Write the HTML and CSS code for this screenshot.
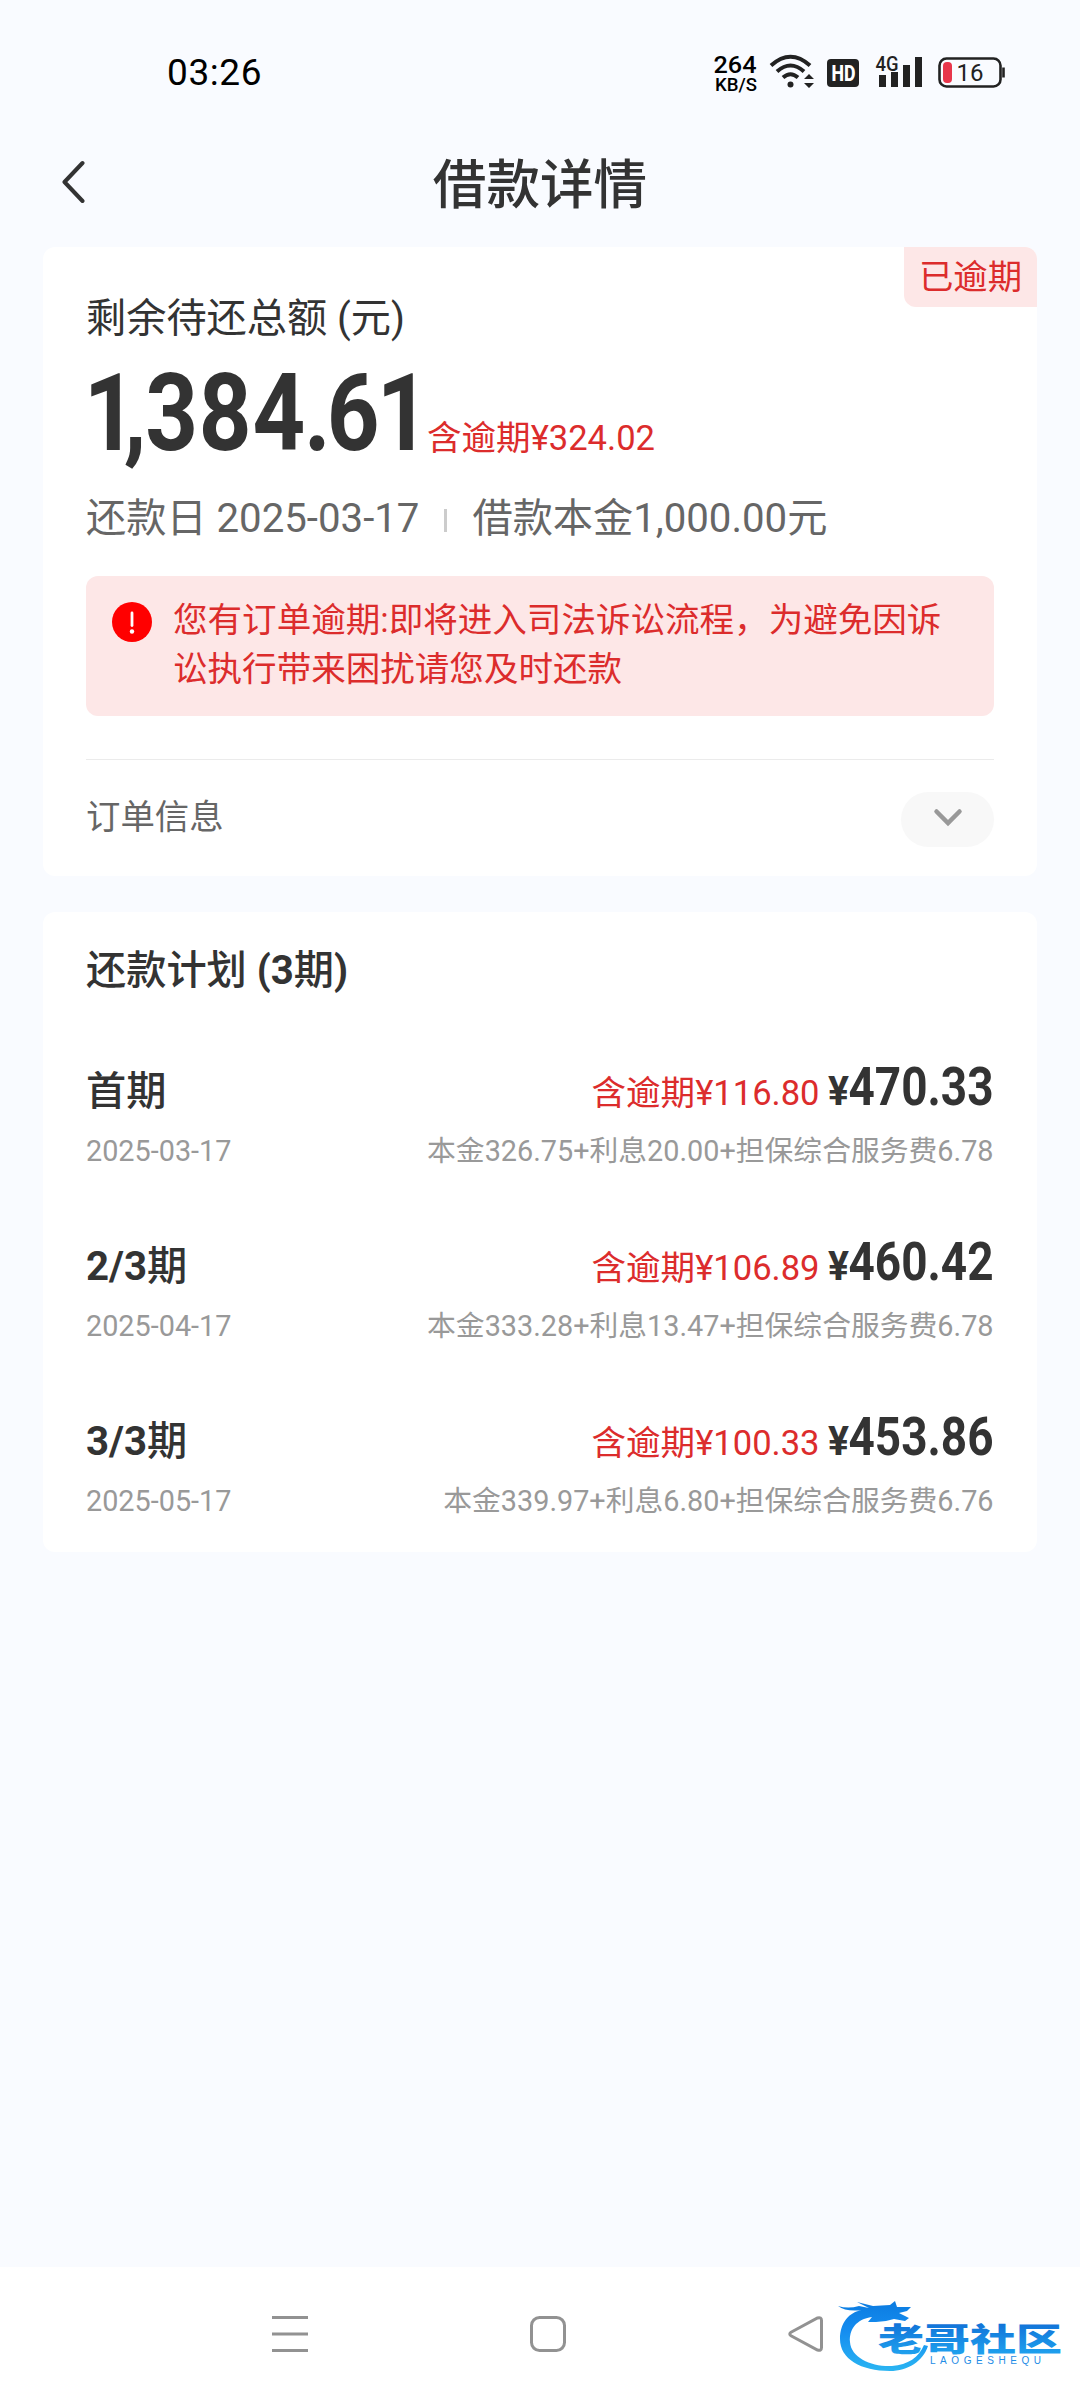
FILE: index.html
```html
<!DOCTYPE html>
<html lang="zh-CN">
<head>
  <meta charset="UTF-8" />
  <meta name="viewport" content="width=device-width, initial-scale=1.0"/>
  <title>借款详情</title>
  <link rel="stylesheet" href="styles.css">
</head>
<body>
  <div class="status-bar">
    <span class="time">03:26</span>
    <svg class="status-icons" width="300" height="44" viewBox="710 50 300 44">
      <text class="net" x="713.5" y="73" font-size="24" textLength="43" lengthAdjust="spacingAndGlyphs">264</text>
      <text class="net" x="715" y="90.5" font-size="18.5" textLength="42" lengthAdjust="spacingAndGlyphs">KB/S</text>
      <!-- wifi -->
      <g fill="none" stroke="#222" stroke-width="4">
        <path d="M771 65.5Q790.5 48 810 65.5"/>
        <path d="M777 71.5Q790.5 59.5 804 71.5"/>
        <path d="M783 77.5Q790.5 71 798 77.5"/>
      </g>
      <circle cx="790.5" cy="84.5" r="3" fill="#222"/>
      <path d="M804 79l5-5 5 5zM804 83l5 5 5-5z" fill="#222"/>
      <!-- HD -->
      <rect x="827" y="59" width="32" height="28" rx="4" fill="#222"/>
      <text class="hd" x="831.5" y="81" font-size="22" textLength="24" lengthAdjust="spacingAndGlyphs">HD</text>
      <!-- signal -->
      <text class="net gray" x="875.5" y="70.5" font-size="20" textLength="23" lengthAdjust="spacingAndGlyphs">4G</text>
      <path d="M879 75h7v12h-7zM891 72h7v15h-7zM903 65h7v22h-7zM915 57h7v30h-7z" fill="#222"/>
      <!-- battery -->
      <rect x="939.5" y="58.5" width="61" height="28" rx="7" fill="none" stroke="#222" stroke-width="2.6"/>
      <rect x="943" y="62" width="9" height="21" rx="4" fill="#e8364b"/>
      <path d="M1003.5 67.5v10" stroke="#222" stroke-width="2.6"/>
      <text class="battery" x="956.5" y="81" font-size="24">16</text>
    </svg>
  </div>

  <div class="header">
    <svg class="back" width="24" height="44" viewBox="0 0 24 44">
      <path d="M21.5 3L3.5 22l18 19" fill="none" stroke="#333" stroke-width="4" stroke-linecap="round" stroke-linejoin="round"/>
    </svg>
    <h1>借款详情</h1>
  </div>

  <div class="card summary">
    <div class="badge">已逾期</div>
    <div class="label">剩余待还总额 (元)</div>
    <div class="total">
      <svg class="amount" width="330" height="80">
        <text transform="scale(.86 1)" x="-2.5 44 69 131 193.5 253.5 280 338" y="80" font-size="107">1,384.61</text>
      </svg>
      <span class="overdue">含逾期¥324.02</span>
    </div>
    <div class="meta">
      <span>还款日 2025-03-17</span>
      <i class="split"></i>
      <span>借款本金1,000.00元</span>
    </div>
    <div class="alert">
      <svg width="40" height="40" viewBox="0 0 40 40">
        <circle cx="20" cy="20" r="20" fill="#f00"/>
        <path d="M20 11v12.500" stroke="#fff" stroke-width="2.800" stroke-linecap="round"/>
        <circle cx="20" cy="29.500" r="2.200" fill="#fff"/>
      </svg>
      <p>您有订单逾期:即将进入司法诉讼流程，为避免因诉讼执行带来困扰请您及时还款</p>
    </div>
    <div class="order">
      <span>订单信息</span>
      <div class="toggle">
        <svg width="30" height="20" viewBox="0 0 30 20">
          <path d="M3.500 3.500L15 15 26.500 3.500" fill="none" stroke="#999" stroke-width="4.500" stroke-linecap="round"/>
        </svg>
      </div>
    </div>
  </div>

  <div class="card plan">
    <h2>还款计划 <b>(3</b>期<b>)</b></h2>
    <div class="list">
      <div class="item">
        <div class="row main">
          <span class="term">首期</span>
          <span class="overdue">含逾期¥116.80</span>
          <svg class="amount" width="166" height="40">
            <text x="0" y="40" font-size="40" textLength="21" lengthAdjust="spacingAndGlyphs">¥</text>
            <text x="20.5" y="40" font-size="53" textLength="145" lengthAdjust="spacingAndGlyphs">470.33</text>
          </svg>
        </div>
        <div class="row sub">
          <span>2025-03-17</span>
          <span>本金326.75+利息20.00+担保综合服务费6.78</span>
        </div>
      </div>
      <div class="item">
        <div class="row main">
          <span class="term"><b>2/3</b>期</span>
          <span class="overdue">含逾期¥106.89</span>
          <svg class="amount" width="166" height="40">
            <text x="0" y="40" font-size="40" textLength="21" lengthAdjust="spacingAndGlyphs">¥</text>
            <text x="20.5" y="40" font-size="53" textLength="145" lengthAdjust="spacingAndGlyphs">460.42</text>
          </svg>
        </div>
        <div class="row sub">
          <span>2025-04-17</span>
          <span>本金333.28+利息13.47+担保综合服务费6.78</span>
        </div>
      </div>
      <div class="item">
        <div class="row main">
          <span class="term"><b>3/3</b>期</span>
          <span class="overdue">含逾期¥100.33</span>
          <svg class="amount" width="166" height="40">
            <text x="0" y="40" font-size="40" textLength="21" lengthAdjust="spacingAndGlyphs">¥</text>
            <text x="20.5" y="40" font-size="53" textLength="145" lengthAdjust="spacingAndGlyphs">453.86</text>
          </svg>
        </div>
        <div class="row sub">
          <span>2025-05-17</span>
          <span>本金339.97+利息6.80+担保综合服务费6.76</span>
        </div>
      </div>
    </div>
  </div>

  <div class="nav-bar">
    <svg width="36" height="36" viewBox="0 0 36 36">
      <path d="M0 1.500h36M0 18h36M0 34.500h36"/>
    </svg>
    <svg width="36" height="36" viewBox="0 0 36 36">
      <rect x="1.500" y="1.500" width="33" height="33" rx="8"/>
    </svg>
    <svg width="36" height="36" viewBox="0 0 36 36">
      <path d="M3 16.200L29.500 2Q33.500 .8 33.500 4.500V31.500Q33.500 35.200 29.500 34L3 19.800Q.5 18 3 16.200Z"/>
    </svg>
  </div>

  <svg class="watermark" width="226" height="80" viewBox="836 2294 226 80">
    <defs>
      <linearGradient id="blue" gradientUnits="userSpaceOnUse" x1="0" y1="2300" x2="0" y2="2370">
        <stop offset="0" stop-color="#0b7be0"/>
        <stop offset=".45" stop-color="#158df0"/>
        <stop offset="1" stop-color="#2ab4f2"/>
      </linearGradient>
      <linearGradient id="word" x1="0" y1="0" x2="0" y2="1">
        <stop offset=".2" stop-color="#1173d8"/>
        <stop offset="1" stop-color="#22aaf2"/>
      </linearGradient>
    </defs>
    <!-- dragon -->
    <path fill="url(#blue)" d="M838 2306Q848 2309 859 2306L869 2308L857 2302L873 2306L890 2305L895 2301L897 2307L911 2307L907 2311L899 2313L909 2318L905 2321L894 2319L886 2321L876 2322L868 2322L872 2317C856 2319 849 2330 850 2342C851 2358 872 2367 892 2366C908 2365 919 2357 924 2345L928 2346C923 2361 908 2371 890 2371C861 2371 840 2359 840 2339C840 2323 849 2312 862 2310Q846 2312 838 2306Z"/>
    <text class="wm-name" x="878" y="2351" font-size="32" textLength="184" lengthAdjust="spacingAndGlyphs" fill="url(#word)">老哥社区</text>
    <text class="wm-sub" x="930" y="2364" font-size="10" textLength="111" fill="#1f8de6">LAOGESHEQU</text>
  </svg>
</body>
</html>
```
FILE: styles.css
```css
* {
  box-sizing: border-box;
}

body {
  position: relative;
  display: flex;
  flex-direction: column;
  margin: 0;
  height: 2400px;
  background-color: #f9fbff;
  color: #333;
  font-family: Roboto, "Noto Sans CJK SC", sans-serif;
}

h1, h2, p {
  margin: 0;
}

svg {
  display: block;
  flex-shrink: 0;
}

/* 状态栏 */
.status-bar {
  display: flex;
  justify-content: space-between;
  height: 123px;
  padding: 50px 70px 0 167px;
}

.time {
  color: #000;
  font-size: 37px;
  font-weight: 450;
  letter-spacing: 0.6px;
  line-height: 46px;
}

.net {
  font-weight: 500;
  fill: #000;
}

.gray {
  fill: #222;
}

.hd {
  font-weight: 800;
  fill: #fff;
}

.battery {
  fill: #222;
}

.header {
  display: grid;
  grid-template-columns: 60px 1fr 60px;
  align-items: center;
  height: 124px;
}

.back {
  margin: -6px 0 0 61px;
}

.header h1 {
  padding-top: 2px;
  text-align: center;
  font-size: 53.6px;
  font-weight: 500;
  line-height: 70px;
}

.card {
  position: relative;
  margin: 0 43px;
  padding: 0 43.5px 0 43px;
  background-color: #fff;
  border-radius: 12px;
}

.summary {
  height: 629px;
  padding-top: 44px;
}

.badge {
  position: absolute;
  top: 0;
  right: 0;
  width: 133px;
  height: 60px;
  background-color: #fde7e7;
  border-radius: 0 12px 0 12px;
  color: #dc2c2c;
  font-size: 34.4px;
  line-height: 61px;
  text-align: center;
}

.label {
  font-size: 40.2px;
  line-height: 56px;
}

.amount {
  overflow: visible;
  fill: #333;
  font-weight: 700;
}

.total {
  display: flex;
  align-items: baseline;
  gap: 11px;
  height: 86px;
  margin-top: 23px;
}

.overdue {
  color: #dc2c2c;
  font-size: 34.56px;
  line-height: 34px;
}

.meta {
  display: flex;
  align-items: center;
  margin-top: 38px;
  color: #666;
  font-size: 40.2px;
  line-height: 50px;
}

.split {
  width: 3px;
  height: 23px;
  margin: 3px 25px 0;
  background-color: #ccc;
}

.alert {
  display: flex;
  gap: 21px;
  height: 140px;
  margin-top: 32px;
  padding: 20px 40px 0 26px;
  background-color: #fde7e7;
  border-radius: 12px;
  color: #dc2c2c;
  font-size: 34.56px;
  line-height: 49px;
}

.alert svg {
  margin-top: 6px;
}

.order {
  display: flex;
  justify-content: space-between;
  margin-top: 43px;
  padding-top: 32px;
  border-top: 1px solid #ebebeb;
  color: #666;
  font-size: 34.4px;
  line-height: 51px;
}

.toggle {
  display: flex;
  justify-content: center;
  width: 93px;
  height: 55px;
  padding: 16px 0 0 1px;
  background-color: #f8f8f8;
  border-radius: 28px;
}

/* 还款计划 */
.plan {
  height: 640px;
  margin-top: 36px;
  padding-top: 30px;
}

.plan h2 {
  font-size: 40.2px;
  font-weight: 500;
  line-height: 57px;
}

.list {
  display: flex;
  flex-direction: column;
  gap: 69px;
  margin-top: 66px;
}

.row {
  display: flex;
  justify-content: space-between;
}

.main {
  align-items: baseline;
  height: 52px;
}

.term {
  flex: 1;
  font-size: 40.2px;
  font-weight: 500;
  line-height: 50px;
}

.main .overdue {
  margin-right: 8px;
}

.sub {
  margin-top: 14px;
  color: #999;
  font-size: 28.8px;
  line-height: 40px;
}

/* 底部导航 */
.nav-bar {
  display: flex;
  gap: 222px;
  height: 133px;
  margin-top: auto;
  padding: 49px 0 0 272px;
  background-color: #fff;
}

.nav-bar svg {
  fill: none;
  stroke: #929292;
  stroke-width: 3;
}

.watermark {
  position: absolute;
  right: 18px;
  bottom: 26px;
}

.wm-name {
  font-family: "Noto Sans CJK SC", sans-serif;
  font-weight: 900;
}

.wm-sub {
  font-family: "Liberation Sans", sans-serif;
}
```
